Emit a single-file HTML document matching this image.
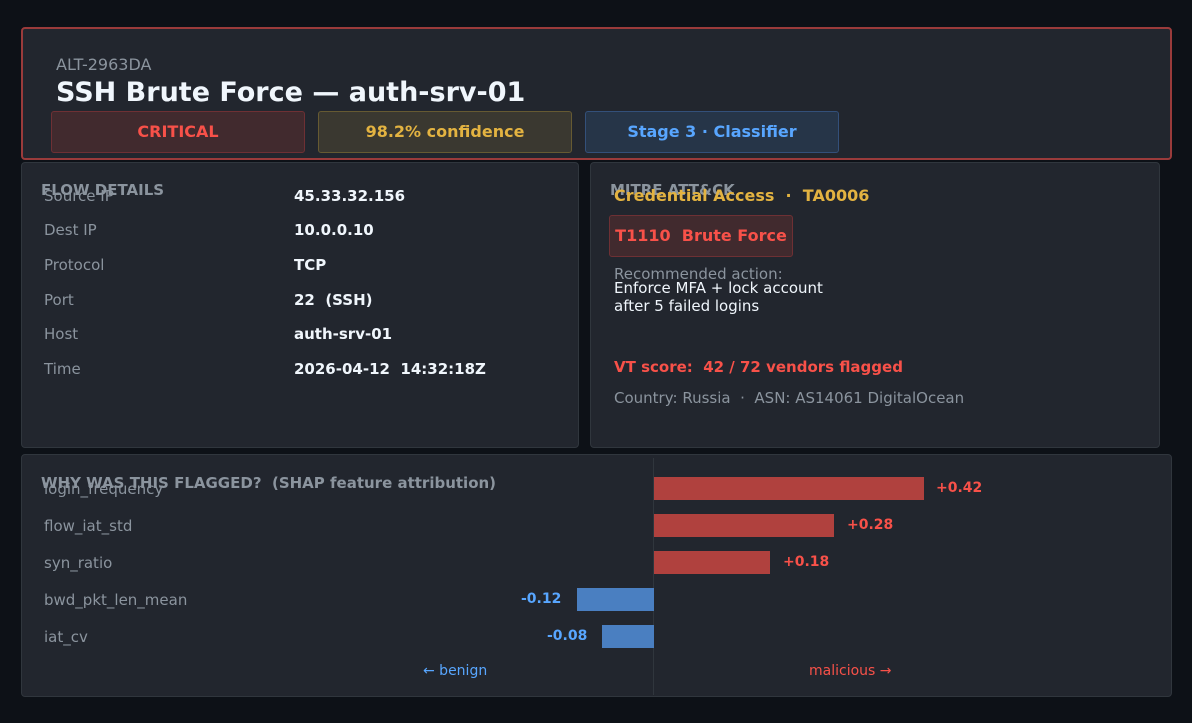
<!DOCTYPE html>
<html><head><meta charset="utf-8"><style>
*{margin:0;padding:0;box-sizing:border-box}
body{width:1192px;height:723px;background:#0d1117;font-family:"DejaVu Sans","Liberation Sans",sans-serif;position:relative;overflow:hidden}
.a{position:absolute;white-space:pre}
.p{position:absolute;background:#22262e;border:1px solid #30363d;border-radius:4px}
.b{position:absolute;border-radius:3px;font-size:16px;font-weight:bold;text-align:center;line-height:40px;height:42px;white-space:pre}
.l{color:#8b949e;font-size:15px}
.v{color:#f0f6fc;font-size:15px;font-weight:bold}
.h{color:#8b949e;font-size:15px;font-weight:bold}
</style></head><body>
<div class="p" style="left:21px;top:27px;width:1151px;height:133px;border:2px solid #9a3b3b"></div>
<div class="a" style="left:56px;top:55px;color:#8b949e;font-size:16px">ALT-2963DA</div>
<div class="a" style="left:56px;top:77px;color:#f0f6fc;font-size:27px;font-weight:bold">SSH Brute Force — auth-srv-01</div>
<div class="b" style="left:51px;top:111px;width:254px;background:#412a2e;border:1px solid #6e3034;color:#f85149">CRITICAL</div>
<div class="b" style="left:318px;top:111px;width:254px;background:#3a3830;border:1px solid #665a32;color:#e3b341">98.2% confidence</div>
<div class="b" style="left:585px;top:111px;width:254px;background:#263548;border:1px solid #33507a;color:#58a6ff">Stage 3 · Classifier</div>

<div class="p" style="left:21px;top:162px;width:558px;height:286px"></div>
<div class="a h" style="left:41px;top:181px">FLOW DETAILS</div>
<div class="a l" style="left:44px;top:187px">Source IP</div><div class="a v" style="left:294px;top:187px">45.33.32.156</div>
<div class="a l" style="left:44px;top:221px">Dest IP</div><div class="a v" style="left:294px;top:221px">10.0.0.10</div>
<div class="a l" style="left:44px;top:256px">Protocol</div><div class="a v" style="left:294px;top:256px">TCP</div>
<div class="a l" style="left:44px;top:291px">Port</div><div class="a v" style="left:294px;top:291px">22  (SSH)</div>
<div class="a l" style="left:44px;top:325px">Host</div><div class="a v" style="left:294px;top:325px">auth-srv-01</div>
<div class="a l" style="left:44px;top:360px">Time</div><div class="a v" style="left:294px;top:360px">2026-04-12  14:32:18Z</div>

<div class="p" style="left:590px;top:162px;width:570px;height:286px"></div>
<div class="a h" style="left:610px;top:181px">MITRE ATT&amp;CK</div>
<div class="a" style="left:614px;top:186px;color:#e3b341;font-size:16px;font-weight:bold">Credential Access  ·  TA0006</div>
<div class="b" style="left:609px;top:215px;width:184px;background:#412a2e;border:1px solid #6e3034;color:#f85149">T1110  Brute Force</div>
<div class="a l" style="left:614px;top:265px">Recommended action:</div>
<div class="a" style="left:614px;top:279px;color:#f0f6fc;font-size:15px;line-height:18px">Enforce MFA + lock account
after 5 failed logins</div>
<div class="a" style="left:614px;top:358px;color:#f85149;font-size:15px;font-weight:bold">VT score:  42 / 72 vendors flagged</div>
<div class="a l" style="left:614px;top:389px">Country: Russia  ·  ASN: AS14061 DigitalOcean</div>

<div class="p" style="left:21px;top:454px;width:1151px;height:243px"></div>
<div class="a" style="left:653px;top:458px;width:1px;height:237px;background:#30363d"></div>
<div class="a h" style="left:41px;top:474px">WHY WAS THIS FLAGGED?  (SHAP feature attribution)</div>
<div class="a l" style="left:44px;top:480px">login_frequency</div>
<div class="a l" style="left:44px;top:517px">flow_iat_std</div>
<div class="a l" style="left:44px;top:554px">syn_ratio</div>
<div class="a l" style="left:44px;top:591px">bwd_pkt_len_mean</div>
<div class="a l" style="left:44px;top:628px">iat_cv</div>
<div class="a" style="left:654px;top:477px;width:270px;height:23px;background:#b0413e"></div>
<div class="a" style="left:654px;top:514px;width:180px;height:23px;background:#b0413e"></div>
<div class="a" style="left:654px;top:551px;width:116px;height:23px;background:#b0413e"></div>
<div class="a" style="left:577px;top:588px;width:77px;height:23px;background:#4a7fc1"></div>
<div class="a" style="left:602px;top:625px;width:52px;height:23px;background:#4a7fc1"></div>
<div class="a" style="left:936px;top:480px;color:#f85149;font-size:14px;font-weight:bold">+0.42</div>
<div class="a" style="left:847px;top:517px;color:#f85149;font-size:14px;font-weight:bold">+0.28</div>
<div class="a" style="left:783px;top:554px;color:#f85149;font-size:14px;font-weight:bold">+0.18</div>
<div class="a" style="left:521px;top:591px;color:#58a6ff;font-size:14px;font-weight:bold">-0.12</div>
<div class="a" style="left:547px;top:628px;color:#58a6ff;font-size:14px;font-weight:bold">-0.08</div>
<div class="a" style="left:423px;top:663px;color:#58a6ff;font-size:14px">← benign</div>
<div class="a" style="left:809px;top:663px;color:#f85149;font-size:14px">malicious →</div>
</body></html>
